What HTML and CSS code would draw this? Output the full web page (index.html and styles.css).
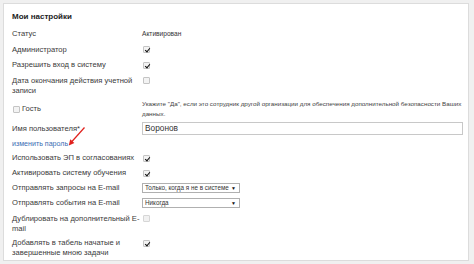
FILE: index.html
```html
<!DOCTYPE html>
<html lang="ru">
<head>
<meta charset="utf-8">
<link rel="stylesheet" href="styles.css">
</head>
<body>
<div class="panel">
  <div class="title">Мои настройки</div>
  <div class="row up"><div class="label">Статус</div><div class="value small">Активирован</div></div>
  <div class="row up"><div class="label">Администратор</div><div class="value"><span class="cb on"></span></div></div>
  <div class="row up"><div class="label">Разрешить вход в систему</div><div class="value"><span class="cb on"></span></div></div>
  <div class="row up two"><div class="label">Дата окончания действия учетной<br>записи</div><div class="value"><span class="cb"></span></div></div>
  <div class="row guest"><div class="label guest-label"><span class="cb"></span>Гость</div><div class="value hint">Укажите "Да", если это сотрудник другой организации для обеспечения дополнительной безопасности Ваших<br>данных.</div></div>
  <div class="row user"><div class="label">Имя пользователя*</div><div class="value"><div class="input">Воронов</div></div></div>
  <div class="row link-row"><a class="link" href="#">изменить пароль</a></div>
  <div class="row"><div class="label">Использовать ЭП в согласованиях</div><div class="value"><span class="cb on"></span></div></div>
  <div class="row"><div class="label">Активировать систему обучения</div><div class="value"><span class="cb on"></span></div></div>
  <div class="row"><div class="label">Отправлять запросы на E-mail</div><div class="value"><div class="select"><span>Только, когда я не в системе</span><span class="arrow">▼</span></div></div></div>
  <div class="row"><div class="label">Отправлять события на E-mail</div><div class="value"><div class="select"><span>Никогда</span><span class="arrow">▼</span></div></div></div>
  <div class="row two dup"><div class="label">Дублировать на дополнительный E-<br>mail</div><div class="value"><span class="cb dis"></span></div></div>
  <div class="row two last"><div class="label">Добавлять в табель начатые и<br>завершенные мною задачи</div><div class="value"><span class="cb on"></span></div></div>
  <svg class="arrow-mark" width="18" height="19" viewBox="0 0 18 19">
    <line x1="16.5" y1="0.5" x2="3.5" y2="15" stroke="#e0211d" stroke-width="1.2"/>
    <polygon points="0.8,18.5 2.2,12.3 6.4,16" fill="#e0211d"/>
  </svg>
</div>
</body>
</html>
```
FILE: styles.css
```css
* { box-sizing: border-box; }
html, body { margin: 0; padding: 0; }
body {
  background: #f0f0f0;
  font-family: "Liberation Sans", Arial, sans-serif;
  color: #3a3a3a;
  width: 474px;
  height: 264px;
  overflow: hidden;
}
.panel {
  position: relative;
  margin: 3px 5px 0 3px;
  height: 258px;
  background: #fff;
  border: 1px solid #dcdcdc;
  padding: 6px 8px 0 8px;
  overflow: hidden;
}
.title {
  margin: 0 0 2px 0;
  font-size: 8px;
  line-height: 14px;
  font-weight: 700;
  color: #222;
}
.row {
  display: grid;
  grid-template-columns: 130px 1fr;
  padding: 2.5px 0 2.5px 0;
  font-size: 7.6px;
  line-height: 10px;
}
.row.up { padding: 3px 0 2.5px 0; }
.label { white-space: nowrap; }
.value { display: flex; align-items: center; min-height: 10px; }
.small { font-size: 6.6px; color: #333; }
.cb {
  display: inline-block;
  width: 7px;
  height: 7px;
  border: 1px solid #c4c4c4;
  background: #f3f3f3;
  border-radius: 1px;
  position: relative;
  margin-left: 1px;
}
.cb.on::after {
  content: "";
  position: absolute;
  left: 1.5px;
  top: 0px;
  width: 2px;
  height: 4px;
  border: solid #111;
  border-width: 0 1.3px 1.3px 0;
  transform: rotate(40deg);
}
.cb.dis { border-color: #d6d6d6; background: #f1f1f1; }
.two .value { align-items: flex-start; padding-top: 1.5px; }
.guest { padding: 1px 0 1px 0; }
.guest-label { display: flex; align-items: center; padding-top: 5px; height: 15px; }
.guest-label .cb { margin: 0 2px 0 1px; }
.hint { font-size: 6.25px; line-height: 10px; color: #444; display: block; white-space: nowrap; }
.user { padding: 2px 0 1px 0; align-items: center; }
.input {
  width: 321px;
  height: 13px;
  border: 1px solid #c8c8c8;
  font-size: 8.3px;
  line-height: 11px;
  padding-left: 2px;
  color: #333;
}
.link-row { display: block; padding: 3px 0 1.5px; }
.link { color: #3b6db3; text-decoration: none; font-size: 7.1px; }
.select {
  width: 98px;
  height: 10px;
  border: 1px solid #b0b0b0;
  display: flex;
  justify-content: space-between;
  align-items: center;
  font-size: 6.3px;
  line-height: 8px;
  padding: 0 3px 0 2px;
  color: #333;
}
.select .arrow { font-size: 5px; color: #111; }
.dup { padding-top: 3px; }
.last { padding-top: 2px; }
.arrow-mark { position: absolute; left: 64px; top: 123px; }
```
